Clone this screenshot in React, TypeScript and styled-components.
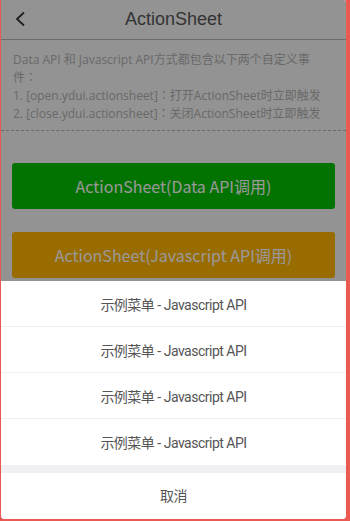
import React, { FC } from "react";
import styled, { createGlobalStyle } from "styled-components";

const GlobalStyle = createGlobalStyle`
  html, body {
    margin: 0;
    padding: 0;
    background: #ea5a50;
  }
  * {
    box-sizing: border-box;
  }
`;

const Frame = styled.div`
  position: relative;
  width: 345px;
  height: 519px;
  margin-left: 1px;
  background: #f5f5f5;
  border-radius: 0 3px 4px 4px;
  overflow: hidden;
  font-family: "Noto Sans", "Noto Sans CJK SC", sans-serif;
`;

const NavBar = styled.header`
  position: relative;
  display: flex;
  align-items: center;
  justify-content: center;
  height: 40px;
  background: #f5f5f5;
  border-bottom: 1px solid #b4b4b4;
`;

const BackButton = styled.div`
  position: absolute;
  left: 12px;
  top: 10px;
  width: 16px;
  height: 18px;
  cursor: pointer;
`;

const Title = styled.h1`
  margin: 0;
  font-family: "Liberation Sans", Arial, sans-serif;
  font-size: 18px;
  font-weight: normal;
  color: #555;
`;

const Intro = styled.div`
  padding: 11px 19px 7px 12px;
  border-bottom: 1px dashed #b0b0b0;
  font-size: 12px;
  line-height: 18px;
  color: #b0b0b0;
  font-family: "Open Sans", "Noto Sans CJK TC", sans-serif;
`;

const ButtonArea = styled.div`
  display: flex;
  flex-direction: column;
  gap: 23px;
  padding: 32px 11px 0 11px;
`;

const Btn = styled.button<{ $bg: string }>`
  height: 46px;
  border: none;
  border-radius: 3px;
  background: ${(p) => p.$bg};
  color: #fff;
  font-size: 16px;
  font-family: "Noto Sans CJK SC", sans-serif;
  cursor: pointer;
`;

const Mask = styled.div`
  position: absolute;
  inset: 0;
  background: rgba(0, 0, 0, 0.4);
`;

const Sheet = styled.div`
  position: absolute;
  left: 0;
  right: 0;
  bottom: 0;
  background: #efeff4;
  display: flex;
  flex-direction: column;
`;

const SheetItem = styled.div`
  height: 46px;
  display: flex;
  align-items: center;
  justify-content: center;
  background: #fff;
  border-bottom: 1px solid #eeeeee;
  font-family: Roboto, "Noto Sans CJK SC", sans-serif;
  font-size: 14px;
  letter-spacing: -0.5px;
  color: #555;
  &:last-of-type {
    border-bottom: none;
  }
`;

const CancelItem = styled(SheetItem)`
  margin-top: 8px;
  padding-bottom: 3px;
  border-bottom: none;
`;

const Menu = styled.div`
  display: flex;
  flex-direction: column;
`;

const items = [1, 2, 3, 4];

const App: FC = () => {
  return (
    <>
      <GlobalStyle />
      <Frame>
        <NavBar>
          <BackButton>
            <svg width="16" height="18" viewBox="0 0 16 18" fill="none">
              <path d="M11 2.5 L4 9 L11 15.5" stroke="#333" strokeWidth="1.8" />
            </svg>
          </BackButton>
          <Title>ActionSheet</Title>
        </NavBar>
        <Intro>
          Data API 和 Javascript API方式都包含以下两个自定义事件：
          <br />
          1. [open.ydui.actionsheet]：打开ActionSheet时立即触发
          <br />
          2. [close.ydui.actionsheet]：关闭ActionSheet时立即触发
        </Intro>
        <ButtonArea>
          <Btn $bg="#04be02">ActionSheet(Data API调用)</Btn>
          <Btn $bg="#ffb400">ActionSheet(Javascript API调用)</Btn>
        </ButtonArea>
        <Mask />
        <Sheet>
          <Menu>
            {items.map((i) => (
              <SheetItem key={i}>示例菜单 - Javascript API</SheetItem>
            ))}
          </Menu>
          <CancelItem>取消</CancelItem>
        </Sheet>
      </Frame>
    </>
  );
};

export default App;
